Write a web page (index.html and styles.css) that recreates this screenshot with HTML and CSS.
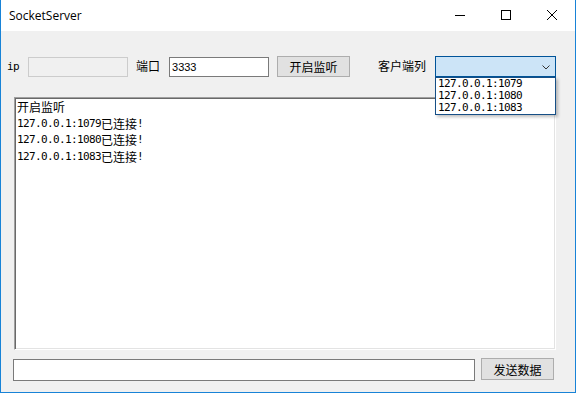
FILE: index.html
```html
<!DOCTYPE html>
<html>
<head>
<meta charset="utf-8">
<link rel="stylesheet" href="styles.css">
</head>
<body>
<div class="window">
  <div class="titlebar">
    <div class="title">SocketServer</div>
    <div class="caption">
      <div class="cbtn"><svg width="10" height="10" viewBox="0 0 10 10"><path d="M0 5.5H10" stroke="#000" stroke-width="1"/></svg></div>
      <div class="cbtn"><svg width="10" height="10" viewBox="0 0 10 10"><rect x="0.5" y="0.5" width="9" height="9" fill="none" stroke="#000" stroke-width="1"/></svg></div>
      <div class="cbtn"><svg width="10" height="10" viewBox="0 0 10 10"><path d="M0 0L10 10M10 0L0 10" stroke="#000" stroke-width="1"/></svg></div>
    </div>
  </div>
  <div class="client">
    <div class="toprow">
      <span class="lbl-ip mono">ip</span>
      <div class="field disabled ipbox"></div>
      <span class="lbl cn lbl-port">端口</span>
      <div class="field portbox">3333</div>
      <div class="btn cn btn-listen">开启监听</div>
      <span class="lbl cn lbl-client">客户端列</span>
      <div class="combo">
        <svg class="chev" width="8" height="5" viewBox="0 0 8 5"><path d="M0.5 0.5L4 4L7.5 0.5" fill="none" stroke="#333" stroke-width="1"/></svg>
        <div class="dropdown mono">
          <div class="opt">127.0.0.1:1079</div>
          <div class="opt">127.0.0.1:1080</div>
          <div class="opt">127.0.0.1:1083</div>
        </div>
      </div>
    </div>
    <div class="log">
      <div class="line cn">开启监听</div>
      <div class="line"><span class="mono">127.0.0.1:1079</span><span class="cn">已连接</span><span class="mono">!</span></div>
      <div class="line"><span class="mono">127.0.0.1:1080</span><span class="cn">已连接</span><span class="mono">!</span></div>
      <div class="line"><span class="mono">127.0.0.1:1083</span><span class="cn">已连接</span><span class="mono">!</span></div>
    </div>
    <div class="bottomrow">
      <div class="field sendbox"></div>
      <div class="btn cn btn-send">发送数据</div>
    </div>
  </div>
</div>
</body>
</html>
```
FILE: styles.css
```css
html, body { margin: 0; padding: 0; }
body { width: 576px; height: 393px; overflow: hidden; background: #f0f0f0; }
.window {
  box-sizing: border-box;
  width: 576px; height: 393px;
  border: 1px solid #1883d7;
  border-top: none;
  display: flex; flex-direction: column;
  background: #f0f0f0;
}
.titlebar {
  height: 31px; background: #fff;
  display: flex; align-items: center; justify-content: space-between;
  flex-shrink: 0;
}
.title {
  padding-left: 8px;
  font-family: "Open Sans", "Noto Sans", sans-serif;
  font-size: 12px; color: #000;
  margin-top: -1px;
}
.caption { display: flex; height: 31px; }
.cbtn { width: 46px; height: 30px; display: flex; align-items: center; justify-content: center; }
.client { flex: 1; display: flex; flex-direction: column; }
.cn { font-family: "Noto Sans CJK SC", sans-serif; font-size: 12px; }
.mono { font-family: "DejaVu Sans Mono", monospace; font-size: 11px; letter-spacing: -0.62px; }
.toprow {
  display: flex; align-items: center;
  margin-top: 25px; height: 21px;
}
.lbl-ip { margin-left: 6px; width: 14px; margin-top: -1px; }
.field {
  box-sizing: border-box; height: 20px;
  border: 1px solid #7a7a7a; background: #fff;
}
.field.disabled { border-color: #cccccc; background: #f0f0f0; }
.ipbox { width: 100px; margin-left: 7px; }
.lbl-port { margin-left: 8px; margin-top: -2px; }
.portbox {
  width: 100px; margin-left: 9px;
  font-family: "Liberation Sans", Arial, sans-serif; font-size: 11px;
  line-height: 18px; padding-left: 2px;
}
.btn {
  box-sizing: border-box; height: 21px;
  background: #e1e1e1; border: 1px solid #adadad;
  display: flex; align-items: center; justify-content: center;
  color: #000;
}
.btn-listen { width: 73px; margin-left: 8px; }
.lbl-client { margin-left: 28px; margin-top: -2px; }
.combo {
  position: relative;
  box-sizing: border-box; width: 121px; height: 21px;
  margin-left: 9px;
  background: #cce4f7; border: 1px solid #005499;
}
.chev { position: absolute; right: 5px; top: 8px; }
.dropdown {
  position: absolute; left: -1px; top: 20px;
  box-sizing: border-box; width: 121px; height: 38px;
  background: #fff; border: 1px solid #164f86;
  box-shadow: 2px 2px 3px rgba(0,0,0,0.25);
  padding-left: 2px; z-index: 2;
}
.opt { height: 12px; line-height: 12px; color: #000; }
.log {
  box-sizing: border-box;
  width: 542px; height: 253px;
  margin-left: 13px; margin-top: 20px;
  background: #fff;
  border-style: solid; border-width: 1px;
  border-color: #a0a0a0 #ffffff #ffffff #a0a0a0;
  box-shadow: inset 1px 1px 0 #696969, inset -1px -1px 0 #e3e3e3;
  padding: 1px 0 0 2px;
}
.line { height: 16.7px; line-height: 16.7px; white-space: nowrap; color: #000; }
.line .cn, .line .mono { vertical-align: top; }
.bottomrow {
  display: flex; align-items: flex-start;
  margin-top: 8px;
}
.sendbox { width: 462px; height: 22px; margin-left: 12px; margin-top: 1px; }
.btn-send { width: 73px; height: 22px; margin-left: 6px; }
```
